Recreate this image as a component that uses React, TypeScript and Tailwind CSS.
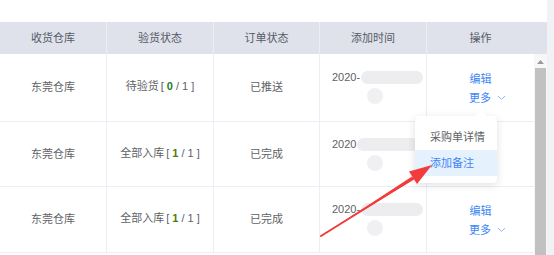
import React from "react";

const rows = [
	{ h: "h-[68px]", wh: "东莞仓库", label: "待验货", done: "0", doneCls: "text-[#1c7d1c]", order: "已推送" },
	{ h: "h-[65px]", wh: "东莞仓库", label: "全部入库", done: "1", doneCls: "text-[#4f7d0a]", order: "已完成" },
	{ h: "h-[66px]", wh: "东莞仓库", label: "全部入库", done: "1", doneCls: "text-[#4f7d0a]", order: "已完成" },
];

const font = { fontFamily: '"Liberation Sans", "Noto Sans CJK SC", sans-serif' };

function DateCell({ dash }: { dash: boolean }) {
	return (
		<div className="flex flex-col justify-center pl-3 gap-[4px]">
			<div className="flex items-center h-[13px]">
				<span className="text-[11px] text-[#606266]">{dash ? "2020-" : "2020"}</span>
				<span className="ml-[1px] w-[62px] h-[13px] rounded-full bg-[#ededef]" />
			</div>
			<div className="flex pl-[35px]">
				<span className="w-[16px] h-[16px] rounded-full bg-[#f0f0f2]" />
			</div>
		</div>
	);
}

function Ops() {
	return (
		<div className="flex flex-col items-center justify-center gap-[3px] text-[11px] text-[#3d86f5] pt-[2px]">
			<span>编辑</span>
			<span className="flex items-center gap-[6px] pl-[14px]">
				更多
				<svg width="9" height="6" viewBox="0 0 9 6" fill="none">
					<path d="M1 1l3.5 3.5L8 1" stroke="#8fb6f5" strokeWidth="1" />
				</svg>
			</span>
		</div>
	);
}

export default function App() {
	return (
		<div className="relative w-[554px] h-[255px] overflow-hidden bg-white" style={font}>
			<div className="h-[22px]" />
			<div className="flex">
				<div className="w-[534px]">
					<div className="grid grid-cols-[107px_107px_106px_107px_107px] h-[32px] bg-[#dfe2eb] text-[11px] text-[#555a66]">
						{["收货仓库", "验货状态", "订单状态", "添加时间", "操作"].map((t, i) => (
							<div key={t} className={`flex items-center justify-center ${i < 4 ? "border-r border-[#eceef4]" : ""}`}>
								{t}
							</div>
						))}
					</div>
					{rows.map((r, idx) => (
						<div key={idx} className={`grid grid-cols-[107px_107px_106px_107px_107px] ${r.h} border-b border-[#ebeef5] text-[11px] text-[#606266]`}>
							<div className="flex items-center justify-center border-r border-[#ebeef5]">{r.wh}</div>
							<div className="flex items-center justify-center border-r border-[#ebeef5] pb-[2px]">
								{r.label}
								<span className="ml-[2px]">[ </span>
								<span className={`font-bold mx-[3px] ${r.doneCls}`}>{r.done}</span>
								<span>/ 1 ]</span>
							</div>
							<div className="flex items-center justify-center border-r border-[#ebeef5]">{r.order}</div>
							<div className="flex border-r border-[#ebeef5]">
								<DateCell dash={idx !== 1} />
							</div>
							{idx === 1 ? <div /> : <Ops />}
						</div>
					))}
				</div>
				<div className="w-[13px] flex flex-col">
					<div className="h-[32px] bg-[#dfe2eb]" />
					<div className="flex-1 bg-[#f7f7f8] flex flex-col items-center">
						<svg className="mt-[6px]" width="7" height="4" viewBox="0 0 7 4">
							<path d="M3.5 0L7 4H0z" fill="#9a9a9a" />
						</svg>
						<div className="mt-[4px] w-[11px] flex-1 bg-[#c1c1c1]" />
					</div>
				</div>
				<div className="w-[7px] bg-[#f1f2f6] -mt-[22px] h-[255px]" />
			</div>

			<div className="absolute left-[415px] top-[116px] w-[82px] h-[67px] bg-white rounded-[4px] shadow-[0_2px_8px_rgba(0,0,0,0.12)] flex flex-col pt-[9px] text-[11px]">
				<div className="absolute -top-[4px] left-[62px] w-[8px] h-[8px] bg-white rotate-45" />
				<div className="h-[25px] flex items-center pl-[15px] text-[#606266]">采购单详情</div>
				<div className="h-[26px] flex items-center pl-[15px] text-[#3d86f5] bg-[#e6f1fe]">添加备注</div>
			</div>

			<svg className="absolute left-0 top-0" width="554" height="255">
				<path d="M321 236 L412 176.5 L414 179.5 Z" fill="#f23b3b" />
				<path d="M432 165 L409 171.5 L417 184 Z" fill="#f23b3b" />
				<path d="M321 236 L414 178" stroke="#f23b3b" strokeWidth="2" strokeLinecap="round" />
			</svg>
		</div>
	);
}
